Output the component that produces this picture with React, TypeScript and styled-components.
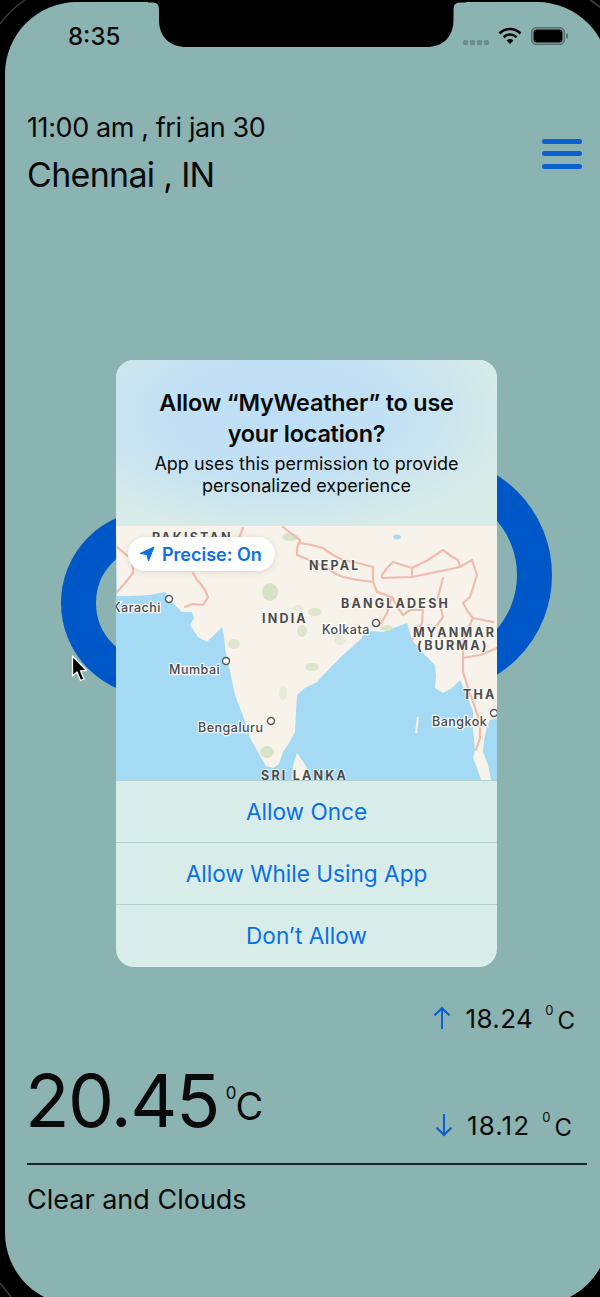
import React from "react";
import styled, { createGlobalStyle } from "styled-components";

const Global = createGlobalStyle`
  html, body { margin: 0; padding: 0; background: #000; }
  #root { width: 600px; height: 1297px; }
  * { box-sizing: border-box; }
`;

const Stage = styled.div`
  position: relative;
  width: 600px;
  height: 1297px;
  background: #000;
  overflow: hidden;
  font-family: Inter, "Liberation Sans", sans-serif;
  color: #0a0a0a;
  padding: 2px 0 0 5px;
`;

const Screen = styled.div`
  width: 604px;
  height: 1303px;
  border-radius: 72px;
  background: #8ab3b2;
  display: flex;
  flex-direction: column;
`;

const Bezel = styled.svg`
  position: absolute;
  inset: 0;
  width: 600px;
  height: 1297px;
  pointer-events: none;
`;

const StatusBar = styled.div`
  height: 68px;
  display: flex;
  align-items: center;
  padding: 0 40px 0 63px;
`;

const Clock = styled.span`
  font-size: 24px;
  line-height: 30px;
  padding-top: 2px;
  font-weight: 500;
  flex: 1;
`;

const SignalDots = styled.div`
  display: flex;
  gap: 2px;
  margin: 12px 9px 0 0;
`;

const SignalDot = styled.i`
  width: 5px;
  height: 5px;
  border-radius: 1px;
  background: #6d8e8e;
`;

const StatusIcon = styled.svg<{ $gap?: number }>`
  display: block;
  margin-left: ${(p) => p.$gap ?? 0}px;
`;

const Header = styled.header`
  margin-top: 40px;
  padding: 0 27px 0 22px;
  display: flex;
  justify-content: space-between;
  align-items: center;
`;

const TimeLine = styled.div`
  font-size: 27px;
  line-height: 34px;
  letter-spacing: -0.4px;
  padding-top: 1px;
`;

const City = styled.div`
  margin-top: 8px;
  font-size: 34px;
  line-height: 44px;
  letter-spacing: -0.7px;
`;

const Menu = styled.div`
  width: 40px;
  display: flex;
  flex-direction: column;
  gap: 7.5px;
`;

const MenuBar = styled.i`
  display: block;
  height: 5px;
  border-radius: 2.5px;
  background: #0b5fcf;
`;

const Main = styled.main`
  position: relative;
  flex: 1;
`;

const Gauge = styled.svg`
  position: absolute;
  left: 0;
  top: 0;
  width: 604px;
  height: 700px;
`;

const Dialog = styled.section`
  position: absolute;
  left: 111px;
  top: 163px;
  width: 381px;
  height: 607px;
  border-radius: 18px;
  overflow: hidden;
  background: #d8ecea;
  display: flex;
  flex-direction: column;
`;

const DialogHead = styled.div`
  height: 166px;
  padding-top: 27px;
  text-align: center;
  background:
    radial-gradient(ellipse 62% 72% at 42% 32%, #bddef6 0%, rgba(189, 222, 246, 0.75) 55%, rgba(189, 222, 246, 0) 100%),
    #d7ebe8;
`;

const DialogTitle = styled.h2`
  margin: 0;
  font-size: 23.4px;
  line-height: 31px;
  font-weight: 600;
  letter-spacing: -0.2px;
`;

const DialogText = styled.p`
  margin: 4px 0 0;
  font-size: 18px;
  line-height: 22px;
  font-weight: 400;
`;

const MapBox = styled.div`
  position: relative;
  height: 254px;
`;

const MapArt = styled.svg`
  display: block;
  width: 381px;
  height: 254px;
`;

const CapsLabel = styled.text`
  font-family: Inter, "Liberation Sans", sans-serif;
  font-size: 12.5px;
  font-weight: 700;
  letter-spacing: 2.2px;
  fill: #4c4c4c;
  paint-order: stroke;
  stroke: rgba(255, 255, 255, 0.7);
  stroke-width: 2px;
`;

const CityLabel = styled.text`
  font-family: Inter, "Liberation Sans", sans-serif;
  font-size: 12.5px;
  font-weight: 500;
  letter-spacing: 0.5px;
  fill: #4a4a4a;
  paint-order: stroke;
  stroke: rgba(255, 255, 255, 0.85);
  stroke-width: 2.5px;
`;

const Pill = styled.div`
  position: absolute;
  left: 12px;
  top: 11px;
  width: 147px;
  height: 34px;
  border-radius: 17px;
  background: #fff;
  box-shadow: 0 1px 6px rgba(0, 0, 0, 0.12);
  display: flex;
  align-items: center;
  gap: 7px;
  padding-left: 11px;
  color: #0a6fe8;
  font-size: 18px;
  font-weight: 600;
`;

const ActionButton = styled.button`
  height: 62px;
  flex: none;
  border: 0;
  border-top: 1px solid #b4cfcf;
  background: transparent;
  color: #0a6fe8;
  font-family: inherit;
  font-size: 22.6px;
  font-weight: 400;
  padding: 0;
`;

const Cursor = styled.svg`
  position: absolute;
  left: 66px;
  top: 458px;
  width: 18px;
  height: 28px;
`;

const Footer = styled.footer`
  padding: 0 22px 88px;
`;

const Readings = styled.div`
  display: flex;
  justify-content: space-between;
  align-items: flex-end;
`;

const Current = styled.div`
  display: flex;
  align-items: flex-start;
  height: 88px;
`;

const BigTemp = styled.span`
  font-size: 73px;
  line-height: 88px;
  letter-spacing: -1.5px;
  margin-left: -2px;
`;

const BigDegree = styled.span`
  font-size: 17px;
  line-height: 20px;
  margin: 26px 0 0 7px;
`;

const BigUnit = styled.span`
  font-size: 38px;
  line-height: 46px;
  margin: 26px 0 0 -1px;
`;

const Range = styled.div`
  display: flex;
  flex-direction: column;
  align-items: flex-end;
  gap: 77px;
  margin-bottom: 5px;
`;

const Stat = styled.div<{ $inset: number }>`
  display: flex;
  align-items: center;
  height: 30px;
  margin-right: ${(p) => p.$inset}px;
`;

const StatValue = styled.span<{ $track: number }>`
  font-size: 26px;
  line-height: 30px;
  letter-spacing: ${(p) => p.$track}px;
  margin-left: 14px;
  padding-top: 2px;
`;

const StatDegree = styled.span`
  font-size: 13px;
  line-height: 14px;
  margin: -16px 0 0 12px;
`;

const StatUnit = styled.span`
  font-size: 24px;
  line-height: 28px;
  margin: 6px 0 0 4px;
`;

const Divider = styled.hr`
  margin: 18px 0 0;
  border: 0;
  height: 2px;
  background: #17282a;
`;

const Condition = styled.div`
  margin-top: 18px;
  font-size: 27px;
  line-height: 34px;
`;

const Notch = styled.svg`
  position: absolute;
  left: 0;
  top: 0;
  width: 600px;
  height: 60px;
`;

const land =
  "M116 526H497V718L490 720L487 727L484 740L483 752L488 765L491 780H481L476 765L473 758L475 750L473 730L473 712L468 698L460 680L452 688L443 693L435 688L436 676L435 665L424 654L412 640L407 623L396 627L383 632L372 631L363 633L362 638L352 647L343 655L330 668L317 682L305 688L297 695L296 712L295 732L289 743L283 752L279 764L273 768L266 766L258 752L250 738L243 716L235 695L231 676L227 658L225 648L224 636L222 627L215 634L207 642L198 637L190 625L194 618L192 612L182 612L173 603L165 592L150 595L130 596L117 596Z";

const borders = [
  "M117 547L124 553L130 558L133 566L133 573L125 583L117 592",
  "M243 528L238 540L232 548",
  "M193 573L197 580L200 583L205 590L208 597L203 605L192 604L185 607",
  "M283 527L292 534L300 540L297 548L297 555L312 561L327 568L336 574L343 577L358 580L373 582",
  "M300 543L312 545L323 548L333 555L343 560L358 563L373 567L373 582",
  "M382 575L387 568L393 562L412 568L412 577L382 578Z",
  "M412 568L428 560L443 550L451 556L458 560L460 567",
  "M412 577L436 572L460 567L472 560L477 575L470 597L463 603L468 612L473 618L493 622",
  "M373 582L377 592L392 597L387 613L380 625",
  "M392 597L398 608L403 615L410 610L423 610L422 623L412 640",
  "M443 578L438 597L443 617L435 628",
  "M473 618L463 640L463 658L480 655L497 648",
  "M463 658L463 672L468 688L473 702L480 722L480 738L476 750",
];

const patches: [number, number, number, number, string][] = [
  [270, 592, 8, 9, "#d6e3c6"],
  [315, 612, 7, 4, "#dde6cc"],
  [302, 631, 5, 6, "#dde6cc"],
  [234, 644, 6, 5, "#dde6cc"],
  [312, 667, 7, 4, "#dde6cc"],
  [283, 693, 4, 7, "#e6ebd8"],
  [267, 752, 7, 6, "#d9e4c6"],
  [290, 537, 8, 4, "#d6e3c6"],
  [387, 628, 6, 3, "#d9e4c6"],
  [340, 640, 6, 5, "#e6ebdc"],
  [298, 608, 6, 3, "#e6ebdc"],
];

const dots: [number, number][] = [
  [169, 599],
  [376, 623],
  [226, 661],
  [271, 721],
  [494, 713],
];

export default function App() {
  return (
    <Stage>
      <Global />
      <Screen>
        <StatusBar>
          <Clock>8:35</Clock>
          <SignalDots>
            <SignalDot />
            <SignalDot />
            <SignalDot />
            <SignalDot />
          </SignalDots>
          <StatusIcon width="24" height="18" viewBox="0 0 24 18">
            <path d="M1.5 6.5C7.5 0.5 16.5 0.5 22.5 6.5" fill="none" stroke="#000" strokeWidth="2.6" />
            <path d="M5.5 10.2C9.2 6.6 14.8 6.6 18.5 10.2" fill="none" stroke="#000" strokeWidth="2.6" />
            <path d="M8.6 13.4L12 17L15.4 13.4C13.4 11.6 10.6 11.6 8.6 13.4Z" fill="#000" />
          </StatusIcon>
          <StatusIcon $gap={9} width="38" height="18" viewBox="0 0 38 18">
            <rect x="0.75" y="0.75" width="32.5" height="16.5" rx="4.5" fill="none" stroke="#56706f" strokeWidth="1.5" />
            <rect x="2.5" y="2.5" width="29" height="13" rx="3" fill="#000" />
            <rect x="35" y="6.5" width="2" height="5" rx="1" fill="#56706f" />
          </StatusIcon>
        </StatusBar>

        <Header>
          <div>
            <TimeLine>11:00 am , fri jan 30</TimeLine>
            <City>Chennai , IN</City>
          </div>
          <Menu>
            <MenuBar />
            <MenuBar />
            <MenuBar />
          </Menu>
        </Header>

        <Main>
          <Gauge viewBox="5 199 604 700">
            <circle cx="154" cy="605" r="75.5" fill="none" stroke="#0057c8" strokeWidth="35" />
            <circle cx="434" cy="577" r="100.5" fill="none" stroke="#0057c8" strokeWidth="35" />
          </Gauge>

          <Dialog>
            <DialogHead>
              <DialogTitle>
                Allow “MyWeather” to use
                <br />
                your location?
              </DialogTitle>
              <DialogText>
                App uses this permission to provide
                <br />
                personalized experience
              </DialogText>
            </DialogHead>

            <MapBox>
              <MapArt viewBox="116 526 381 254">
                <rect x="116" y="526" width="381" height="254" fill="#a5daf5" />
                <path d={land} fill="#f7f2ea" />
                <path d="M297 753L302 760L307 768L310 780H292L293 766Z" fill="#f7f2ea" />
                <path d="M418 717L416 733" stroke="#f7f2ea" strokeWidth="2" />
                <ellipse cx="397" cy="537" rx="4" ry="2.5" fill="#a5daf5" />
                {patches.map(([cx, cy, rx, ry, fill], i) => (
                  <ellipse key={i} cx={cx} cy={cy} rx={rx} ry={ry} fill={fill} />
                ))}
                {borders.map((d, i) => (
                  <path
                    key={i}
                    d={d}
                    fill="none"
                    stroke="#f0bcae"
                    strokeWidth="2.2"
                    strokeLinejoin="round"
                    strokeLinecap="round"
                  />
                ))}
                <CapsLabel x="152" y="542">PAKISTAN</CapsLabel>
                <CapsLabel x="309" y="570">NEPAL</CapsLabel>
                <CapsLabel x="262" y="623">INDIA</CapsLabel>
                <CapsLabel x="341" y="608">BANGLADESH</CapsLabel>
                <CapsLabel x="413" y="637">MYANMAR</CapsLabel>
                <CapsLabel x="417" y="650">(BURMA)</CapsLabel>
                <CapsLabel x="463" y="699">THA</CapsLabel>
                <CapsLabel x="261" y="780">SRI LANKA</CapsLabel>
                <CityLabel x="112" y="612">Karachi</CityLabel>
                <CityLabel x="322" y="634">Kolkata</CityLabel>
                <CityLabel x="169" y="674">Mumbai</CityLabel>
                <CityLabel x="198" y="732">Bengaluru</CityLabel>
                <CityLabel x="432" y="726">Bangkok</CityLabel>
                {dots.map(([cx, cy], i) => (
                  <circle key={i} cx={cx} cy={cy} r="3.5" fill="#fff" stroke="#555" strokeWidth="1.4" />
                ))}
              </MapArt>
              <Pill>
                <svg width="16" height="16" viewBox="0 0 16 16">
                  <path d="M15 1L1 7.5L8 8.5L9.5 15Z" fill="#0a6fe8" stroke="#0a6fe8" strokeWidth="1" strokeLinejoin="round" />
                </svg>
                Precise: On
              </Pill>
            </MapBox>

            <ActionButton>Allow Once</ActionButton>
            <ActionButton>Allow While Using App</ActionButton>
            <ActionButton>Don’t Allow</ActionButton>
          </Dialog>

          <Cursor viewBox="0 0 18 28">
            <path d="M1.5 1V21L6 17L9.5 25.5L13 24L9.5 15.8L15.5 15.5Z" fill="#000" stroke="#fff" strokeWidth="1.3" strokeLinejoin="round" />
          </Cursor>
        </Main>

        <Footer>
          <Readings>
            <Current>
              <BigTemp>20.45</BigTemp>
              <BigDegree>0</BigDegree>
              <BigUnit>C</BigUnit>
            </Current>
            <Range>
              <Stat $inset={12}>
                <svg width="18" height="24" viewBox="0 0 18 24">
                  <path d="M9 23V2M1.5 9.5L9 2L16.5 9.5" fill="none" stroke="#0b5fcf" strokeWidth="2" />
                </svg>
                <StatValue $track={0.4}>18.24</StatValue>
                <StatDegree>0</StatDegree>
                <StatUnit>C</StatUnit>
              </Stat>
              <Stat $inset={15}>
                <svg width="18" height="24" viewBox="0 0 18 24">
                  <path d="M9 1V22M1.5 14.5L9 22L16.5 14.5" fill="none" stroke="#0b5fcf" strokeWidth="2" />
                </svg>
                <StatValue $track={1.1}>18.12</StatValue>
                <StatDegree>0</StatDegree>
                <StatUnit>C</StatUnit>
              </Stat>
            </Range>
          </Readings>
          <Divider />
          <Condition>Clear and Clouds</Condition>
        </Footer>
      </Screen>

      <Notch viewBox="0 0 600 60">
        <path
          d="M148 0V2.5H153Q159 2.5 159 9V20C159 37 170 47 187 47H426C443 47 453.5 37 453.5 20V9Q453.5 2.5 460 2.5H466V0Z"
          fill="#000"
        />
      </Notch>
      <Bezel viewBox="0 0 600 1297">
        <path d="M0 24Q10 10 25 0" fill="none" stroke="#3b3b3b" strokeWidth="1.5" />
        <path d="M0 1283L11 1297" fill="none" stroke="#3b3b3b" strokeWidth="1.5" />
        <path d="M590 0L600 7" fill="none" stroke="#3b3b3b" strokeWidth="2" />
      </Bezel>
    </Stage>
  );
}
